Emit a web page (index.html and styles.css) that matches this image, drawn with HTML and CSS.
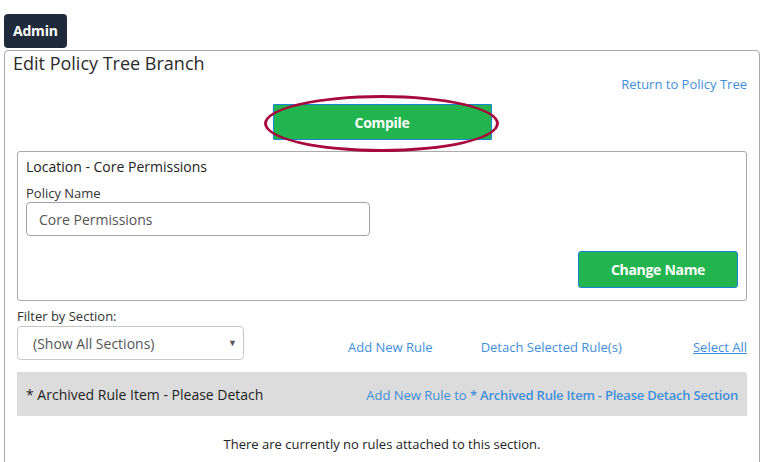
FILE: index.html
```html
<!DOCTYPE html>
<html>
<head>
<meta charset="utf-8">
<link rel="stylesheet" href="styles.css">
</head>
<body>
<div class="page">
  <div class="badge">Admin</div>
  <div class="panel">
    <h1 class="title">Edit Policy Tree Branch</h1>
    <div class="return-row"><a class="link" href="#">Return to Policy Tree</a></div>
    <div class="compile-row">
      <div class="compile-wrap">
        <button class="btn compile">Compile</button>
        <span class="ellipse"></span>
      </div>
    </div>
    <div class="box">
      <div class="box-title">Location - Core Permissions</div>
      <label class="label">Policy Name</label>
      <div class="input">Core Permissions</div>
      <div class="box-actions"><button class="btn change">Change Name</button></div>
    </div>
    <div class="filter-label">Filter by Section:</div>
    <div class="filter-row">
      <div class="select"><span>(Show All Sections)</span><span class="caret">&#9660;</span></div>
      <div class="links">
        <a class="link add" href="#">Add New Rule</a>
        <a class="link detach" href="#">Detach Selected Rule(s)</a>
        <a class="link selall" href="#">Select All</a>
      </div>
    </div>
    <div class="section-head">
      <span class="section-name">* Archived Rule Item - Please Detach</span>
      <a class="link section-add" href="#">Add New Rule to <b>* Archived Rule Item - Please Detach Section</b></a>
    </div>
    <div class="empty">There are currently no rules attached to this section.</div>
  </div>
</div>
</body>
</html>
```
FILE: styles.css
```css
html, body { margin: 0; padding: 0; background: #fff; }
body { font-family: "Open Sans", "Noto Sans", sans-serif; color: #333; overflow: hidden; }
.page { padding: 14px 0 0 4px; }
.badge {
  display: inline-block; background: #1f2a3b; color: #fff; font-weight: 700;
  font-size: 14px; height: 34px; line-height: 34px; padding: 0 9px;
  border-radius: 4px; letter-spacing: -0.2px;
}
.panel {
  margin-top: 2px; width: 756px; box-sizing: border-box; border: 1px solid #a9a9a9;
  border-radius: 4px; padding: 0 12px; height: 420px;
}
.title { margin: 0 0 0 -4px; font-size: 18px; font-weight: 400; line-height: 24px; color: #2b2b2b; }
.return-row { display: flex; justify-content: flex-end; height: 18px; line-height: 18px; }
.link { color: #3f8edb; text-decoration: none; font-size: 13px; }
.compile-row { display: flex; justify-content: center; margin-top: 11px; }
.compile-wrap { position: relative; }
.btn {
  font-family: "Open Sans", "Noto Sans", sans-serif; font-weight: 700; font-size: 14px; color: #fff;
  background: #22b44e; border: 1px solid #1a84d6; border-radius: 3px; letter-spacing: -0.3px;
}
.compile { width: 219px; height: 36px; border-radius: 1px; }
.ellipse {
  position: absolute; left: -9px; top: -9px; width: 229px; height: 51px;
  border: 3.5px solid #a80a3d; border-radius: 50%;
}
.box {
  margin-top: 11px; border: 1px solid #a9a9a9; border-radius: 3px; height: 150px;
  box-sizing: border-box; padding: 5px 8px 0 8px; display: flex; flex-direction: column;
}
.box-title { font-size: 14px; line-height: 20px; color: #222; }
.label { font-size: 13px; line-height: 18px; margin-top: 7px; color: #333; }
.input {
  width: 344px; height: 34px; box-sizing: border-box; border: 1px solid #a59eac; border-radius: 4px;
  padding-left: 12px; font-size: 14px; line-height: 33px; color: #555;
}
.box-actions { display: flex; justify-content: flex-end; margin-top: 15px; }
.change { width: 160px; height: 37px; }
.filter-label { font-size: 13px; line-height: 18px; margin-top: 6px; color: #333; }
.filter-row { display: flex; align-items: flex-end; margin-top: 1px; }
.select {
  width: 227px; height: 34px; box-sizing: border-box; border: 1px solid #c8c8c8; border-radius: 4px;
  display: flex; align-items: center; justify-content: space-between; padding: 1px 6px 0 15px;
  font-size: 14px; color: #555;
}
.caret { font-size: 9px; color: #555; margin-top: -3px; }
.links { flex: 1; display: flex; padding-bottom: 4px; line-height: 18px; }
.add { margin-left: 104px; }
.detach { margin-left: 48px; }
.selall { margin-left: auto; text-decoration: underline; }
.section-head {
  margin-top: 12px; height: 44px; background: #dcdcdc; border-radius: 0 3px 0 0;
  display: flex; align-items: center; justify-content: space-between; padding: 1px 9px 0 9px; box-sizing: border-box;
}
.section-name { font-size: 14px; color: #1f1f1f; }
.section-add b { font-weight: 600; letter-spacing: -0.22px; }
.empty { text-align: center; font-size: 13px; color: #222; margin-top: 19px; line-height: 18px; }
```
